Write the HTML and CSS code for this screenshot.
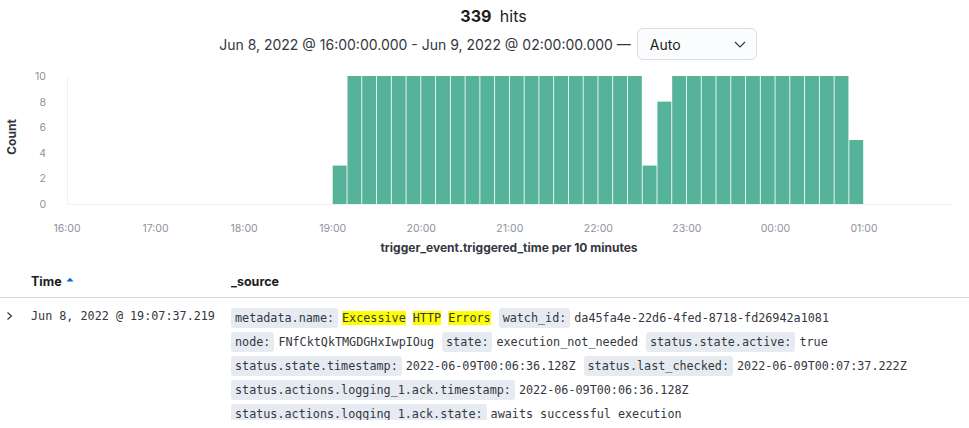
FILE: index.html
```html
<!DOCTYPE html>
<html lang="en">
<head>
<meta charset="utf-8">
<title>Discover</title>
<link rel="stylesheet" href="styles.css">
</head>
<body>
<div class="summary">
  <div class="hits"><strong>339</strong> hits</div>
  <div class="range">
    <span>Jun 8, 2022 @ 16:00:00.000 - Jun 9, 2022 @ 02:00:00.000 —</span>
    <div class="select">
      <span>Auto</span>
      <svg class="select-arrow" width="12" height="7" viewBox="0 0 12 7"><polyline points="1,1 6,6 11,1" fill="none" stroke="#343741" stroke-width="1.2"/></svg>
    </div>
  </div>
</div>

<svg class="chart" width="969" height="205" viewBox="0 60 969 205">
  <g class="ylabels">
    <text x="46" y="80">10</text>
    <text x="46" y="105.5">8</text>
    <text x="46" y="131">6</text>
    <text x="46" y="156.5">4</text>
    <text x="46" y="182">2</text>
    <text x="46" y="207.5">0</text>
  </g>
  <text class="axis-title" x="16" y="137" transform="rotate(-90 16 137)">Count</text>
  <line x1="67.5" y1="76" x2="67.5" y2="204" class="axis-line"/>
  <line x1="67" y1="204.5" x2="953" y2="204.5" class="axis-line"/>
  <g class="bars">
    <rect x="332.70" y="165.6" width="13.9" height="38.4"/>
    <rect x="347.46" y="76" width="13.9" height="128"/>
    <rect x="362.22" y="76" width="13.9" height="128"/>
    <rect x="376.98" y="76" width="13.9" height="128"/>
    <rect x="391.74" y="76" width="13.9" height="128"/>
    <rect x="406.50" y="76" width="13.9" height="128"/>
    <rect x="421.26" y="76" width="13.9" height="128"/>
    <rect x="436.02" y="76" width="13.9" height="128"/>
    <rect x="450.78" y="76" width="13.9" height="128"/>
    <rect x="465.54" y="76" width="13.9" height="128"/>
    <rect x="480.30" y="76" width="13.9" height="128"/>
    <rect x="495.06" y="76" width="13.9" height="128"/>
    <rect x="509.82" y="76" width="13.9" height="128"/>
    <rect x="524.58" y="76" width="13.9" height="128"/>
    <rect x="539.34" y="76" width="13.9" height="128"/>
    <rect x="554.10" y="76" width="13.9" height="128"/>
    <rect x="568.86" y="76" width="13.9" height="128"/>
    <rect x="583.62" y="76" width="13.9" height="128"/>
    <rect x="598.38" y="76" width="13.9" height="128"/>
    <rect x="613.14" y="76" width="13.9" height="128"/>
    <rect x="627.90" y="76" width="13.9" height="128"/>
    <rect x="642.66" y="165.6" width="13.9" height="38.4"/>
    <rect x="657.42" y="101.6" width="13.9" height="102.4"/>
    <rect x="672.18" y="76" width="13.9" height="128"/>
    <rect x="686.94" y="76" width="13.9" height="128"/>
    <rect x="701.70" y="76" width="13.9" height="128"/>
    <rect x="716.46" y="76" width="13.9" height="128"/>
    <rect x="731.22" y="76" width="13.9" height="128"/>
    <rect x="745.98" y="76" width="13.9" height="128"/>
    <rect x="760.74" y="76" width="13.9" height="128"/>
    <rect x="775.50" y="76" width="13.9" height="128"/>
    <rect x="790.26" y="76" width="13.9" height="128"/>
    <rect x="805.02" y="76" width="13.9" height="128"/>
    <rect x="819.78" y="76" width="13.9" height="128"/>
    <rect x="834.54" y="76" width="13.9" height="128"/>
    <rect x="849.30" y="140" width="13.9" height="64"/>
  </g>
  <g class="xlabels">
    <text x="67" y="232">16:00</text>
    <text x="155.56" y="232">17:00</text>
    <text x="244.12" y="232">18:00</text>
    <text x="332.68" y="232">19:00</text>
    <text x="421.24" y="232">20:00</text>
    <text x="509.8" y="232">21:00</text>
    <text x="598.36" y="232">22:00</text>
    <text x="686.92" y="232">23:00</text>
    <text x="775.48" y="232">00:00</text>
    <text x="864.04" y="232">01:00</text>
  </g>
  <text class="axis-title" x="509" y="252">trigger_event.triggered_time per 10 minutes</text>
</svg>

<div class="doc-table">
  <div class="table-head">
    <div></div>
    <div class="th">Time <svg class="sort" width="8" height="5" viewBox="0 0 8 5"><polygon points="0.5,4.5 4,0.8 7.5,4.5" fill="#0b64dd"/></svg></div>
    <div class="th">_source</div>
  </div>
  <div class="table-row">
    <div class="toggle"><svg width="7" height="10" viewBox="0 0 7 10"><polyline points="1.5,1.5 5.5,5 1.5,8.5" fill="none" stroke="#343741" stroke-width="1.2"/></svg></div>
    <div class="time">Jun 8, 2022 @ 19:07:37.219</div>
    <dl class="source">
      <div class="pair"><dt>metadata.name:</dt><dd><mark>Excessive</mark> <mark>HTTP</mark> <mark>Errors</mark></dd></div>
      <div class="pair"><dt>watch_id:</dt><dd>da45fa4e-22d6-4fed-8718-fd26942a1081</dd></div>
      <div class="pair"><dt>node:</dt><dd>FNfCktQkTMGDGHxIwpIOug</dd></div>
      <div class="pair"><dt>state:</dt><dd>execution_not_needed</dd></div>
      <div class="pair"><dt>status.state.active:</dt><dd>true</dd></div>
      <div class="pair"><dt>status.state.timestamp:</dt><dd>2022-06-09T00:06:36.128Z</dd></div>
      <div class="pair"><dt>status.last_checked:</dt><dd>2022-06-09T00:07:37.222Z</dd></div>
      <div class="pair"><dt>status.actions.logging_1.ack.timestamp:</dt><dd>2022-06-09T00:06:36.128Z</dd></div>
      <div class="pair"><dt>status.actions.logging_1.ack.state:</dt><dd>awaits_successful_execution</dd></div>
    </dl>
  </div>
</div>
</body>
</html>
```
FILE: styles.css
```css
html, body {
  margin: 0;
  padding: 0;
  background: #ffffff;
}

body {
  font-family: Inter, "Noto Sans", sans-serif;
  color: #343741;
  width: 969px;
  height: 428px;
  overflow: hidden;
}

.summary {
  display: flex;
  flex-direction: column;
  align-items: center;
  padding-top: 6px;
}

.hits {
  font-size: 16px;
  line-height: 20px;
  color: #1a1c21;
  padding-left: 18px;
}

.hits strong {
  font-weight: 700;
  margin-right: 4px;
}

.range {
  display: flex;
  align-items: center;
  gap: 6px;
  margin-top: 2px;
  padding-left: 7px;
  font-size: 14px;
  color: #343741;
}

.select {
  width: 120px;
  height: 32px;
  box-sizing: border-box;
  border: 1px solid #d9dee7;
  border-radius: 6px;
  background: #fbfcfd;
  display: flex;
  align-items: center;
  justify-content: space-between;
  padding: 0 10px 0 12px;
  font-size: 14px;
  color: #1a1c21;
}

.select-arrow {
  display: block;
}

.chart {
  display: block;
}

.chart .ylabels text {
  font-family: Inter, sans-serif;
  font-size: 10.5px;
  fill: #8c939e;
  text-anchor: end;
}

.chart .xlabels text {
  font-family: Inter, sans-serif;
  font-size: 10.5px;
  fill: #8c939e;
  text-anchor: middle;
}

.chart .axis-title {
  font-family: Inter, sans-serif;
  font-size: 12px;
  font-weight: 700;
  fill: #343741;
  text-anchor: middle;
}

.chart .axis-line {
  stroke: #eef0f3;
  stroke-width: 1;
}

.chart .bars rect {
  fill: #54b399;
}

.doc-table {
  display: flex;
  flex-direction: column;
}

.table-head {
  display: grid;
  grid-template-columns: 31px 200px 1fr;
  height: 32px;
  align-items: center;
  border-bottom: 1px solid #d3dae6;
}

.th {
  font-size: 12.5px;
  font-weight: 700;
  color: #1a1c21;
  display: flex;
  align-items: center;
  gap: 4px;
}

.th .sort {
  margin-top: -4px;
}

.table-row {
  display: grid;
  grid-template-columns: 31px 200px 1fr;
  padding-top: 10px;
  align-items: start;
}

.toggle {
  padding-left: 6px;
  padding-top: 3px;
}

.toggle svg {
  display: block;
}

.time {
  font-family: "DejaVu Sans Mono", "Liberation Mono", monospace;
  font-size: 11.75px;
  line-height: 16px;
  color: #343741;
  white-space: nowrap;
}

.source {
  margin: 0;
  display: flex;
  flex-wrap: wrap;
  align-content: flex-start;
  row-gap: 4px;
  column-gap: 8px;
  max-height: 112px;
  overflow: hidden;
  padding-right: 20px;
  font-family: "DejaVu Sans Mono", "Liberation Mono", monospace;
  font-size: 11.75px;
  line-height: 20px;
}

.pair {
  display: flex;
  gap: 4px;
  white-space: nowrap;
}

.pair dt {
  background: #e6ebf2;
  border-radius: 3px;
  padding: 0 4px;
  color: #343741;
}

.pair dd {
  margin: 0;
  color: #343741;
}

.pair mark {
  background: #ffff00;
  color: #343741;
}
```
